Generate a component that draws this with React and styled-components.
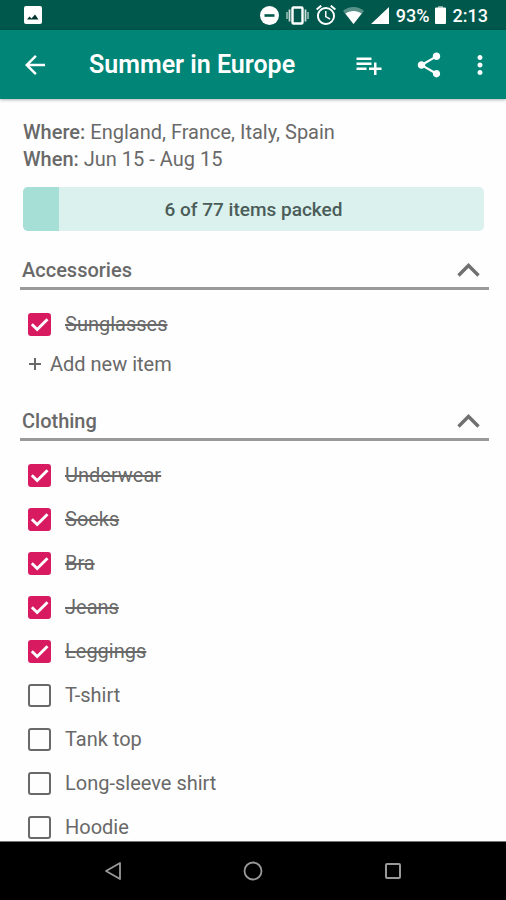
import React, { useState } from 'react';
import styled, { createGlobalStyle } from 'styled-components';

const GlobalStyle = createGlobalStyle`
  * {
    box-sizing: border-box;
  }

  body {
    margin: 0;
    background-color: #fefefe;
    color: #696969;
    font-family: Roboto, 'Liberation Sans', sans-serif;
    font-size: 20px;
  }

  button {
    border: none;
    padding: 0;
    background: none;
    color: inherit;
    font: inherit;
    cursor: pointer;
  }

  svg {
    display: block;
    flex: none;
  }
`;

const Screen = styled.div`
  display: flex;
  flex-direction: column;
  height: 100vh;
`;

const StatusBar = styled.div`
  display: flex;
  flex: none;
  align-items: center;
  justify-content: space-between;
  height: 30px;
  padding: 0 18px 0 24px;
  background-color: #00574b;
  color: #fff;
  font-size: 18px;
  font-weight: 500;
`;

const StatusIcons = styled.div`
  display: flex;
  align-items: center;
  gap: 7px;
`;

const Battery = styled.span`
  display: flex;
  align-items: center;
  gap: 5px;
`;

const AppBar = styled.header`
  position: relative;
  display: flex;
  flex: none;
  align-items: center;
  height: 69px;
  padding: 0 5px 0 20px;
  background-color: #008577;
  color: #fff;
  box-shadow: 0 1px 3px rgba(0, 0, 0, 0.3);
`;

const Title = styled.h1`
  flex: 1;
  margin: 0 0 0 39px;
  font-size: 25px;
  font-weight: 600;
  line-height: 36px;
  white-space: nowrap;
`;

const BarButton = styled.button`
  display: flex;
  align-items: center;
  justify-content: center;
  width: ${(props) => props.$width || 60}px;
  height: 48px;
`;

const Content = styled.main`
  flex: 1;
  min-height: 0;
  overflow-y: auto;
  padding: 20px 17px 0 20px;
  scrollbar-width: none;
`;

const TripInfo = styled.div`
  padding: 0 5px 0 3px;
`;

const InfoLine = styled.p`
  margin: 0;
  line-height: 27px;
`;

const Label = styled.span`
  font-weight: 500;
`;

const Progress = styled.div`
  display: grid;
  height: 44px;
  margin-top: 14px;
  border-radius: 5px;
  overflow: hidden;
  background-color: #daf1ed;
`;

const ProgressFill = styled.div`
  grid-area: 1 / 1;
  background-color: #a5dfd6;
`;

const ProgressText = styled.span`
  grid-area: 1 / 1;
  place-self: center;
  color: #4b5c59;
  font-size: 19px;
  font-weight: 500;
`;

const Section = styled.section`
  margin-top: 22px;
`;

const SectionHeader = styled.button`
  display: flex;
  align-items: center;
  justify-content: space-between;
  width: 100%;
  height: 37px;
  padding: 0 9px 0 2px;
  border-bottom: 3px solid #9a9a9a;
`;

const SectionTitle = styled.span`
  font-weight: 500;
`;

const Chevron = styled.svg`
  transform: ${(props) => (props.$open ? 'none' : 'rotate(180deg)')};
`;

const ItemList = styled.ul`
  margin: 0;
  padding: 12px 0 0 8px;
  list-style: none;
`;

const ItemRow = styled.label`
  display: flex;
  align-items: center;
  gap: 14px;
  height: 44px;
  cursor: pointer;
`;

const CheckBox = styled.span`
  display: grid;

  svg {
    grid-area: 1 / 1;
    place-self: center;
    pointer-events: none;
  }
`;

const CheckInput = styled.input`
  grid-area: 1 / 1;
  appearance: none;
  width: 23px;
  height: 23px;
  margin: 0;
  border: 2px solid #696969;
  border-radius: 3px;

  &:checked {
    border-color: #d81b60;
    background-color: #d81b60;
  }
`;

const ItemName = styled.span`
  text-decoration: ${(props) => (props.$packed ? 'line-through' : 'none')};
`;

const AddButton = styled.button`
  display: flex;
  align-items: center;
  gap: 8px;
  height: 36px;
  margin-left: 8px;
`;

const NavBar = styled.nav`
  display: flex;
  flex: none;
  justify-content: center;
  height: 59px;
  border-top: 1px solid #777;
  background-color: #000;
`;

const NavButton = styled.button`
  display: flex;
  flex: 0 1 140px;
  align-items: center;
  justify-content: center;
`;

const TOTAL_ITEMS = 77;

const initialItems = [
  { id: 1, category: 'Accessories', name: 'Sunglasses', packed: true },
  { id: 2, category: 'Clothing', name: 'Underwear', packed: true },
  { id: 3, category: 'Clothing', name: 'Socks', packed: true },
  { id: 4, category: 'Clothing', name: 'Bra', packed: true },
  { id: 5, category: 'Clothing', name: 'Jeans', packed: true },
  { id: 6, category: 'Clothing', name: 'Leggings', packed: true },
  { id: 7, category: 'Clothing', name: 'T-shirt', packed: false },
  { id: 8, category: 'Clothing', name: 'Tank top', packed: false },
  { id: 9, category: 'Clothing', name: 'Long-sleeve shirt', packed: false },
  { id: 10, category: 'Clothing', name: 'Hoodie', packed: false },
];

const categories = [
  { name: 'Accessories', canAdd: true },
  { name: 'Clothing', canAdd: false },
];

const BarIcon = ({ d }) => (
  <svg width="30" height="30" viewBox="0 0 24 24" fill="currentColor">
    <path d={d} />
  </svg>
);

const PhoneStatus = () => (
  <StatusBar>
    <svg width="18" height="18" viewBox="0 0 18 18">
      <rect width="18" height="18" rx="2" fill="#fff" />
      <path d="M3 13.5l2.5-3 2 2L11 8.5l3.5 5z" fill="#00352d" />
    </svg>
    <StatusIcons>
      <svg width="19" height="19" viewBox="0 0 19 19">
        <circle cx="9.5" cy="9.5" r="9.5" fill="#fff" />
        <path d="M4.5 9.5h10" stroke="#00574b" strokeWidth="2.6" />
      </svg>
      <svg width="23" height="19" viewBox="0 0 23 19" fill="none" stroke="#fff">
        <rect x="6.5" y="1.5" width="10" height="16" rx="1" strokeWidth="2.4" />
        <path d="M3.5 3.5v12M19.5 3.5v12" strokeWidth="1.8" opacity="0.8" />
        <path d="M1 6v7M22 6v7" strokeWidth="1.6" opacity="0.6" />
      </svg>
      <svg width="20" height="20" viewBox="2 2 20 20" fill="#fff">
        <path d="M22 5.72l-4.6-3.86-1.29 1.53 4.6 3.86L22 5.72zM7.88 3.39L6.6 1.86 2 5.71l1.29 1.53 4.59-3.85zM12.5 8H11v6l4.75 2.85.75-1.23-4-2.37V8zM12 4c-4.97 0-9 4.03-9 9s4.02 9 9 9a9 9 0 0 0 0-18zm0 16c-3.87 0-7-3.13-7-7s3.13-7 7-7 7 3.13 7 7-3.13 7-7 7z" />
      </svg>
      <svg width="21" height="17" viewBox="0 0 21 17" fill="#fff">
        <path d="M0 4C6-1.3 15-1.3 21 4L10.5 17z" opacity="0.35" />
        <path d="M2.3 6.5C7 3 14 3 18.7 6.5L10.5 17z" />
      </svg>
      <svg width="18" height="17" viewBox="0 0 18 17" fill="#fff">
        <path d="M18 0v17H0z" />
      </svg>
      <Battery>
        93%
        <svg width="11" height="18" viewBox="0 0 11 18" fill="#fff">
          <path d="M3 0h5v2H3z" opacity="0.5" />
          <rect y="1.5" width="11" height="16.5" rx="1" />
        </svg>
      </Battery>
      <span>2:13</span>
    </StatusIcons>
  </StatusBar>
);

const Item = ({ item, onToggle }) => (
  <li>
    <ItemRow>
      <CheckBox>
        <CheckInput
          type="checkbox"
          checked={item.packed}
          onChange={() => onToggle(item.id)}
        />
        {item.packed && (
          <svg width="23" height="23" viewBox="0 0 23 23" fill="none" stroke="#fff">
            <path d="M3.8 11.3l5.4 5.2L19.5 6.3" strokeWidth="2.9" />
          </svg>
        )}
      </CheckBox>
      <ItemName $packed={item.packed}>{item.name}</ItemName>
    </ItemRow>
  </li>
);

const Category = ({ name, canAdd, items, onToggle, onAdd }) => {
  const [open, setOpen] = useState(true);

  return (
    <Section>
      <SectionHeader aria-expanded={open} onClick={() => setOpen(!open)}>
        <SectionTitle>{name}</SectionTitle>
        <Chevron $open={open} width="23" height="14" viewBox="0 0 23 14">
          <path d="M1.5 12.5l10-10 10 10" fill="none" stroke="#707070" strokeWidth="3.4" />
        </Chevron>
      </SectionHeader>
      {open && (
        <ItemList>
          {items.map((item) => (
            <Item key={item.id} item={item} onToggle={onToggle} />
          ))}
        </ItemList>
      )}
      {open && canAdd && (
        <AddButton onClick={() => onAdd(name)}>
          <svg width="14" height="14" viewBox="0 0 14 14" stroke="#696969" strokeWidth="2">
            <path d="M7 1v12M1 7h12" />
          </svg>
          Add new item
        </AddButton>
      )}
    </Section>
  );
};

const App = () => {
  const [items, setItems] = useState(initialItems);

  const packedCount = items.filter((item) => item.packed).length;
  const total = TOTAL_ITEMS + items.length - initialItems.length;

  const handleToggle = (id) => {
    setItems((prevItems) =>
      prevItems.map((item) => (item.id === id ? { ...item, packed: !item.packed } : item))
    );
  };

  const handleAdd = (category) => {
    setItems((prevItems) => [
      ...prevItems,
      { id: prevItems.length + 1, category, name: 'New item', packed: false },
    ]);
  };

  return (
    <Screen>
      <GlobalStyle />
      <PhoneStatus />
      <AppBar>
        <BarButton $width={30} aria-label="Back">
          <BarIcon d="M20 11H7.83l5.59-5.59L12 4l-8 8 8 8 1.41-1.41L7.83 13H20v-2z" />
        </BarButton>
        <Title>Summer in Europe</Title>
        <BarButton aria-label="Add to list">
          <BarIcon d="M14 10H2v2h12v-2zm0-4H2v2h12V6zm4 8v-4h-2v4h-4v2h4v4h2v-4h4v-2h-4zM2 16h8v-2H2v2z" />
        </BarButton>
        <BarButton aria-label="Share">
          <BarIcon d="M18 16.08c-.76 0-1.44.3-1.96.77L8.91 12.7c.05-.23.09-.46.09-.7s-.04-.47-.09-.7l7.05-4.11c.54.5 1.25.81 2.04.81 1.66 0 3-1.34 3-3s-1.34-3-3-3-3 1.34-3 3c0 .24.04.47.09.7L8.04 9.81C7.5 9.31 6.79 9 6 9c-1.66 0-3 1.34-3 3s1.34 3 3 3c.79 0 1.5-.31 2.04-.81l7.12 4.16c-.05.21-.08.43-.08.65 0 1.61 1.31 2.92 2.92 2.92s2.92-1.31 2.92-2.92-1.31-2.92-2.92-2.92z" />
        </BarButton>
        <BarButton $width={42} aria-label="More options">
          <BarIcon d="M12 8c1.1 0 2-.9 2-2s-.9-2-2-2-2 .9-2 2 .9 2 2 2zm0 2c-1.1 0-2 .9-2 2s.9 2 2 2 2-.9 2-2-.9-2-2-2zm0 6c-1.1 0-2 .9-2 2s.9 2 2 2 2-.9 2-2-.9-2-2-2z" />
        </BarButton>
      </AppBar>
      <Content>
        <TripInfo>
          <InfoLine>
            <Label>Where:</Label> England, France, Italy, Spain
          </InfoLine>
          <InfoLine>
            <Label>When:</Label> Jun 15 - Aug 15
          </InfoLine>
          <Progress>
            <ProgressFill style={{ width: `${(packedCount / total) * 100}%` }} />
            <ProgressText>
              {packedCount} of {total} items packed
            </ProgressText>
          </Progress>
        </TripInfo>
        {categories.map(({ name, canAdd }) => (
          <Category
            key={name}
            name={name}
            canAdd={canAdd}
            items={items.filter((item) => item.category === name)}
            onToggle={handleToggle}
            onAdd={handleAdd}
          />
        ))}
      </Content>
      <NavBar>
        <NavButton aria-label="Back">
          <svg width="18" height="20" viewBox="0 0 18 20" fill="none" stroke="#999" strokeWidth="1.8">
            <path d="M16 2v16L2 10z" strokeLinejoin="round" />
          </svg>
        </NavButton>
        <NavButton aria-label="Home">
          <svg width="20" height="20" viewBox="0 0 20 20" fill="none" stroke="#999" strokeWidth="1.8">
            <circle cx="10" cy="10" r="8.5" />
          </svg>
        </NavButton>
        <NavButton aria-label="Recent apps">
          <svg width="18" height="18" viewBox="0 0 18 18" fill="none" stroke="#999" strokeWidth="2">
            <rect x="2" y="2" width="14" height="14" rx="1" />
          </svg>
        </NavButton>
      </NavBar>
    </Screen>
  );
};

export default App;
